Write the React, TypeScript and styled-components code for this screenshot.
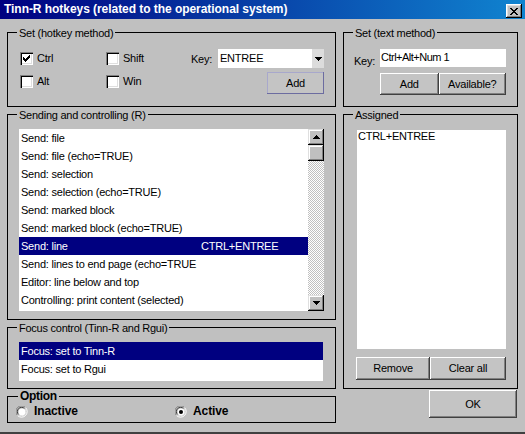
import React from 'react';
import styled, { createGlobalStyle } from 'styled-components';

const GlobalStyle = createGlobalStyle`
  html, body { margin: 0; padding: 0; background: #c0c0c0; }
  body {
    font-family: "Liberation Sans", Arial, sans-serif;
    font-size: 11px;
    line-height: 13px;
    letter-spacing: -0.22px;
    color: #000;
  }
  * { box-sizing: border-box; }
`;

const Window = styled.div`
  width: 525px;
  height: 434px;
  background: #c0c0c0;
  border-bottom: 2px solid #404040;
  display: flex;
  flex-direction: column;
  overflow: hidden;
`;

const TitleBar = styled.div`
  height: 19px;
  flex: none;
  background: linear-gradient(to right, #000080, #1084d0);
  display: flex;
  align-items: flex-start;
  justify-content: space-between;
  padding: 0 3px 0 4px;
`;

const TitleText = styled.div`
  color: #fff;
  font-weight: bold;
  font-size: 12px;
  line-height: 19px;
  letter-spacing: -0.05px;
  white-space: nowrap;
`;

const CloseButton = styled.div`
  margin-top: 4px;
  width: 16px;
  height: 14px;
  background: #c0c0c0;
  box-shadow: inset -1px -1px #000, inset 1px 1px #fff, inset -2px -2px #808080, inset 2px 2px #dfdfdf;
  display: flex;
  align-items: center;
  justify-content: center;
`;

const Body = styled.div`
  flex: 1;
  display: grid;
  grid-template-columns: 329px 175px;
  column-gap: 7px;
  padding: 13px 0 0 7px;
`;

const Column = styled.div<{ $gap: number }>`
  display: flex;
  flex-direction: column;
  gap: ${(p) => p.$gap}px;
`;

const Group = styled.div<{ $h: number }>`
  position: relative;
  height: ${(p) => p.$h}px;
  border: 1px solid #000;
  flex: none;
`;

const GroupLabel = styled.div<{ $bold?: boolean }>`
  position: absolute;
  left: ${(p) => (p.$bold ? 10 : 9)}px;
  top: ${(p) => (p.$bold ? -8 : -6)}px;
  padding: 0 2px;
  background: #c0c0c0;
  white-space: nowrap;
  font-weight: ${(p) => (p.$bold ? 'bold' : 'normal')};
  font-size: ${(p) => (p.$bold ? 12 : 11)}px;
  line-height: ${(p) => (p.$bold ? 14 : 13)}px;
  letter-spacing: ${(p) => (p.$bold ? '-0.3px' : '-0.25px')};
`;

const HotkeyGrid = styled.div`
  display: grid;
  grid-template-columns: 86px 85px 27px 106px;
  grid-template-rows: 19px 22px;
  row-gap: 4px;
  padding: 16px 0 0 12px;
`;

const CheckItem = styled.label<{ $nudge?: number }>`
  display: flex;
  align-items: center;
  gap: 4px;
  margin-top: ${(p) => p.$nudge ?? 0}px;
  align-self: ${(p) => (p.$nudge ? 'start' : 'center')};
`;

const CheckBox = styled.span`
  width: 13px;
  height: 13px;
  flex: none;
  background: #fff;
  box-shadow: inset 1px 1px #808080, inset 2px 2px #000, inset -1px -1px #fff, inset -2px -2px #dfdfdf;
  display: block;
  position: relative;
`;

const FieldLabel = styled.span<{ $drop?: number }>`
  align-self: center;
  margin-top: ${(p) => (p.$drop ?? 0) * 2}px;
  white-space: nowrap;
`;

const Combo = styled.div`
  background: #fff;
  height: 19px;
  display: flex;
  align-items: stretch;
`;

const ComboText = styled.div`
  flex: 1;
  padding: 3px 0 0 2px;
`;

const ComboArrow = styled.div`
  width: 12px;
  background: #dcdcdc;
  display: flex;
  align-items: center;
  justify-content: center;
`;

const Button = styled.button<{ $w: number; $h: number; $accent?: boolean }>`
  width: ${(p) => p.$w}px;
  height: ${(p) => p.$h}px;
  padding: 0;
  margin: 0;
  border: none;
  background: #c4c4c4;
  font: inherit;
  letter-spacing: inherit;
  color: #000;
  box-shadow: ${(p) =>
    p.$accent
      ? 'inset -1px -1px #6c6ca0, inset 1px 1px #a8a8cc'
      : 'inset -1px -1px #404040, inset 1px 1px #fff, inset -2px -2px #808080'};
  justify-self: end;
`;

const TextGrid = styled.div`
  display: grid;
  grid-template-columns: 26px 126px;
  grid-template-rows: 18px 22px;
  row-gap: 6px;
  padding: 16px 0 0 10px;
`;

const TextInput = styled.div`
  background: #fff;
  padding: 2px 0 0 1px;
  letter-spacing: -0.5px;
`;

const ButtonRow = styled.div<{ $span?: boolean; $ml?: number; $mt?: number }>`
  display: flex;
  grid-column: ${(p) => (p.$span ? '2' : 'auto')};
  margin-left: ${(p) => p.$ml ?? 0}px;
  margin-top: ${(p) => p.$mt ?? 0}px;
`;

const GroupInner = styled.div<{ $pt: number; $pl: number }>`
  padding: ${(p) => p.$pt}px 0 0 ${(p) => p.$pl}px;
  display: flex;
  flex-direction: column;
  align-items: flex-start;
`;

const ListFrame = styled.div<{ $w: number; $h: number }>`
  width: ${(p) => p.$w}px;
  height: ${(p) => p.$h}px;
  display: flex;
  background: #fff;
`;

const ListBody = styled.div`
  flex: 1;
  overflow: hidden;
`;

const ListRow = styled.div<{ $sel?: boolean }>`
  height: 18px;
  line-height: 18px;
  padding-left: 2px;
  display: grid;
  grid-template-columns: 180px 1fr;
  white-space: nowrap;
  overflow: hidden;
  background: ${(p) => (p.$sel ? '#000080' : 'transparent')};
  color: ${(p) => (p.$sel ? '#fff' : '#000')};
`;

const Scrollbar = styled.div`
  width: 16px;
  display: flex;
  flex-direction: column;
`;

const ScrollButton = styled.div`
  width: 16px;
  height: 16px;
  flex: none;
  background: #c0c0c0;
  box-shadow: inset -1px -1px #000, inset 1px 1px #dfdfdf, inset -2px -2px #808080, inset 2px 2px #fff;
  display: flex;
  align-items: center;
  justify-content: center;
`;

const ScrollTrack = styled.div`
  flex: 1;
  background: repeating-conic-gradient(#c0c0c0 0 25%, #fff 0 50%) 0 0 / 2px 2px;
`;

const AssignedList = styled.div`
  width: 149px;
  height: 219px;
  background: #fff;
  padding-left: 1px;
  letter-spacing: -0.25px;
`;

const OptionRow = styled.div`
  display: grid;
  grid-template-columns: 159px auto;
  padding: 8px 0 0 8px;
  font-weight: bold;
  font-size: 12px;
  letter-spacing: -0.1px;
`;

const RadioItem = styled.label`
  display: flex;
  align-items: center;
  gap: 6px;
  line-height: 13px;
`;

const RadioDot = styled.svg`
  flex: none;
  display: block;
`;

const OkRow = styled.div`
  display: flex;
  justify-content: flex-end;
  padding-right: 1px;
  margin-top: -6px;
`;

const CheckMark = () => (
  <svg width="13" height="13" viewBox="0 0 13 13" style={{ position: 'absolute', left: 0, top: 0 }} shapeRendering="crispEdges">
    <rect x="9" y="3" width="1" height="1" />
    <rect x="8" y="4" width="2" height="1" />
    <rect x="3" y="5" width="1" height="1" />
    <rect x="7" y="5" width="3" height="1" />
    <rect x="3" y="6" width="2" height="1" />
    <rect x="6" y="6" width="3" height="1" />
    <rect x="3" y="7" width="5" height="1" />
    <rect x="4" y="8" width="3" height="1" />
    <rect x="5" y="9" width="1" height="1" />
  </svg>
);

const Check = ({ label, checked, nudge }: { label: string; checked?: boolean; nudge?: number }) => (
  <CheckItem $nudge={nudge}>
    <CheckBox>{checked && <CheckMark />}</CheckBox>
    <span>{label}</span>
  </CheckItem>
);

const Radio = ({ label, on }: { label: string; on?: boolean }) => (
  <RadioItem>
    <RadioDot width="12" height="12" viewBox="0 0 12 12">
      <path d="M1.5 9.5 A5 5 0 0 1 9.5 1.5" fill="none" stroke="#808080" strokeWidth="1" />
      <path d="M9.5 1.5 A5 5 0 0 1 1.5 9.5" fill="none" stroke="#fff" strokeWidth="1" />
      <path d="M2.6 8.6 A4 4 0 0 1 8.6 2.6" fill="none" stroke="#404040" strokeWidth="1" />
      <path d="M8.6 2.6 A4 4 0 0 1 2.6 8.6" fill="none" stroke="#dfdfdf" strokeWidth="1" />
      <circle cx="6" cy="6" r="3.4" fill="#fff" />
      {on && <circle cx="6" cy="6" r="2" fill="#000" />}
    </RadioDot>
    <span>{label}</span>
  </RadioItem>
);

const Arrow = ({ up }: { up?: boolean }) => (
  <svg width="7" height="4" viewBox="0 0 7 4" shapeRendering="crispEdges">
    {up ? (
      <>
        <rect x="3" y="0" width="1" height="1" />
        <rect x="2" y="1" width="3" height="1" />
        <rect x="1" y="2" width="5" height="1" />
        <rect x="0" y="3" width="7" height="1" />
      </>
    ) : (
      <>
        <rect x="0" y="0" width="7" height="1" />
        <rect x="1" y="1" width="5" height="1" />
        <rect x="2" y="2" width="3" height="1" />
        <rect x="3" y="3" width="1" height="1" />
      </>
    )}
  </svg>
);

const sendingItems: [string, string?][] = [
  ['Send: file'],
  ['Send: file (echo=TRUE)'],
  ['Send: selection'],
  ['Send: selection (echo=TRUE)'],
  ['Send: marked block'],
  ['Send: marked block (echo=TRUE)'],
  ['Send: line', 'CTRL+ENTREE'],
  ['Send: lines to end page (echo=TRUE'],
  ['Editor: line below and top'],
  ['Controlling: print content (selected)'],
];

export default function App() {
  return (
    <>
      <GlobalStyle />
      <Window>
        <TitleBar>
          <TitleText>Tinn-R hotkeys (related to the operational system)</TitleText>
          <CloseButton>
            <svg width="8" height="7" viewBox="0 0 8 7" shapeRendering="crispEdges">
              <path d="M0 0h2v1h-2zM6 0h2v1h-2zM1 1h2v1h-2zM5 1h2v1h-2zM2 2h4v1h-4zM3 3h2v1h-2zM2 4h4v1h-4zM1 5h2v1h-2zM5 5h2v1h-2zM0 6h2v1h-2zM6 6h2v1h-2z" fill="#000" />
            </svg>
          </CloseButton>
        </TitleBar>
        <Body>
          <Column $gap={7}>
            <Group $h={75}>
              <GroupLabel>Set (hotkey method)</GroupLabel>
              <HotkeyGrid>
                <Check label="Ctrl" checked />
                <Check label="Shift" />
                <FieldLabel $drop={1}>Key:</FieldLabel>
                <Combo>
                  <ComboText>ENTREE</ComboText>
                  <ComboArrow>
                    <Arrow />
                  </ComboArrow>
                </Combo>
                <Check label="Alt" nudge={3} />
                <Check label="Win" nudge={3} />
                <span />
                <Button $w={57} $h={22} $accent>
                  Add
                </Button>
              </HotkeyGrid>
            </Group>
            <Group $h={206}>
              <GroupLabel>Sending and controlling (R)</GroupLabel>
              <GroupInner $pt={14} $pl={11}>
                <ListFrame $w={305} $h={182}>
                  <ListBody>
                    {sendingItems.map(([name, key], i) => (
                      <ListRow key={i} $sel={i === 6}>
                        <span>{name}</span>
                        <span>{key ?? ''}</span>
                      </ListRow>
                    ))}
                  </ListBody>
                  <Scrollbar>
                    <ScrollButton>
                      <Arrow up />
                    </ScrollButton>
                    <ScrollButton />
                    <ScrollTrack />
                    <ScrollButton>
                      <Arrow />
                    </ScrollButton>
                  </Scrollbar>
                </ListFrame>
              </GroupInner>
            </Group>
            <Group $h={62}>
              <GroupLabel>Focus control (Tinn-R and Rgui)</GroupLabel>
              <GroupInner $pt={14} $pl={11}>
                <ListFrame $w={304} $h={39}>
                  <ListBody>
                    <ListRow $sel>
                      <span>Focus: set to Tinn-R</span>
                      <span />
                    </ListRow>
                    <ListRow>
                      <span>Focus: set to Rgui</span>
                      <span />
                    </ListRow>
                  </ListBody>
                </ListFrame>
              </GroupInner>
            </Group>
            <Group $h={27}>
              <GroupLabel $bold>Option</GroupLabel>
              <OptionRow>
                <Radio label="Inactive" />
                <Radio label="Active" on />
              </OptionRow>
            </Group>
          </Column>
          <Column $gap={7}>
            <Group $h={75}>
              <GroupLabel>Set (text method)</GroupLabel>
              <TextGrid>
                <FieldLabel $drop={3}>Key:</FieldLabel>
                <TextInput>Ctrl+Alt+Num 1</TextInput>
                <ButtonRow $span>
                  <Button $w={59} $h={22}>
                    Add
                  </Button>
                  <Button $w={68} $h={22}>
                    Available?
                  </Button>
                </ButtonRow>
              </TextGrid>
            </Group>
            <Group $h={275}>
              <GroupLabel>Assigned</GroupLabel>
              <GroupInner $pt={15} $pl={13}>
                <AssignedList>CTRL+ENTREE</AssignedList>
                <ButtonRow $ml={-1} $mt={8}>
                  <Button $w={74} $h={23}>
                    Remove
                  </Button>
                  <Button $w={76} $h={23}>
                    Clear all
                  </Button>
                </ButtonRow>
              </GroupInner>
            </Group>
            <OkRow>
              <Button $w={88} $h={28}>
                OK
              </Button>
            </OkRow>
          </Column>
        </Body>
      </Window>
    </>
  );
}
